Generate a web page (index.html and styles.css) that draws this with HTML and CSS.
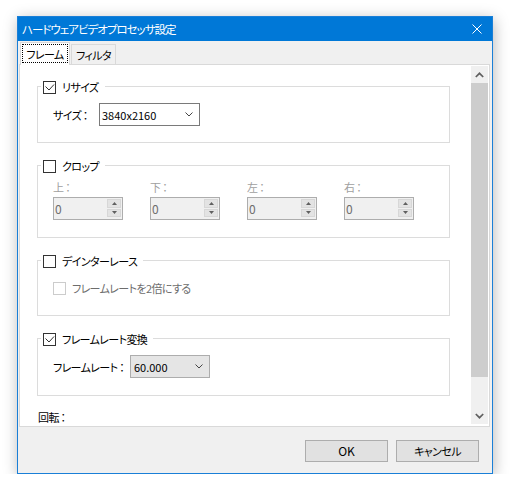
FILE: index.html
```html
<!DOCTYPE html>
<html lang="ja">
<head>
<meta charset="utf-8">
<title>ハードウェアビデオプロセッサ設定</title>
<link rel="stylesheet" href="styles.css">
</head>
<body>
<div class="window">
  <div class="titlebar">
    <span class="title">ハードウェアビデオプロセッサ設定</span>
    <svg class="close" width="10" height="10" viewBox="0 0 10 10"><path d="M0.5 0.5L9.5 9.5M9.5 0.5L0.5 9.5" stroke="#fff" stroke-width="1" fill="none"/></svg>
  </div>
  <div class="tabs">
    <div class="tab active"><span class="focus">フレーム</span></div>
    <div class="tab">フィルタ</div>
  </div>
  <div class="panel">
    <div class="scroll">
      <div class="group g-resize">
        <div class="legend">
          <span class="cb"><svg width="11" height="11" viewBox="0 0 11 11"><path d="M1.5 4.5L5 8L10 2.5" fill="none" stroke="#333" stroke-width="1"/></svg></span>
          <span class="legend-text">リサイズ</span>
        </div>
        <div class="row">
          <span class="lbl size-lbl">サイズ<span class="colon">：</span></span>
          <div class="combo combo-edit">
            <span class="combo-val">3840x2160</span>
            <svg class="chev" width="8" height="5" viewBox="0 0 8 5"><path d="M0.5 0.5L4 4L7.5 0.5" fill="none" stroke="#444" stroke-width="1"/></svg>
          </div>
        </div>
      </div>

      <div class="group g-crop">
        <div class="legend">
          <span class="cb"></span>
          <span class="legend-text">クロップ</span>
        </div>
        <div class="spins">
          <div class="spin-col">
            <span class="dis-lbl">上<span class="colon">：</span></span>
            <div class="spin"><span class="spin-val">0</span><div class="spin-btns"><span class="sbtn"><svg width="5" height="3" viewBox="0 0 5 3"><path d="M2.5 0L5 3H0Z" fill="#606060"/></svg></span><span class="sbtn"><svg width="5" height="3" viewBox="0 0 5 3"><path d="M0 0H5L2.5 3Z" fill="#606060"/></svg></span></div></div>
          </div>
          <div class="spin-col">
            <span class="dis-lbl">下<span class="colon">：</span></span>
            <div class="spin"><span class="spin-val">0</span><div class="spin-btns"><span class="sbtn"><svg width="5" height="3" viewBox="0 0 5 3"><path d="M2.5 0L5 3H0Z" fill="#606060"/></svg></span><span class="sbtn"><svg width="5" height="3" viewBox="0 0 5 3"><path d="M0 0H5L2.5 3Z" fill="#606060"/></svg></span></div></div>
          </div>
          <div class="spin-col">
            <span class="dis-lbl">左<span class="colon">：</span></span>
            <div class="spin"><span class="spin-val">0</span><div class="spin-btns"><span class="sbtn"><svg width="5" height="3" viewBox="0 0 5 3"><path d="M2.5 0L5 3H0Z" fill="#606060"/></svg></span><span class="sbtn"><svg width="5" height="3" viewBox="0 0 5 3"><path d="M0 0H5L2.5 3Z" fill="#606060"/></svg></span></div></div>
          </div>
          <div class="spin-col">
            <span class="dis-lbl">右<span class="colon">：</span></span>
            <div class="spin"><span class="spin-val">0</span><div class="spin-btns"><span class="sbtn"><svg width="5" height="3" viewBox="0 0 5 3"><path d="M2.5 0L5 3H0Z" fill="#606060"/></svg></span><span class="sbtn"><svg width="5" height="3" viewBox="0 0 5 3"><path d="M0 0H5L2.5 3Z" fill="#606060"/></svg></span></div></div>
          </div>
        </div>
      </div>

      <div class="group g-deint">
        <div class="legend">
          <span class="cb"></span>
          <span class="legend-text">デインターレース</span>
        </div>
        <div class="check-row">
          <span class="cb cb-dis"></span>
          <span class="dis-text">フレームレートを2倍にする</span>
        </div>
      </div>

      <div class="group g-fps">
        <div class="legend">
          <span class="cb"><svg width="11" height="11" viewBox="0 0 11 11"><path d="M1.5 4.5L5 8L10 2.5" fill="none" stroke="#333" stroke-width="1"/></svg></span>
          <span class="legend-text">フレームレート変換</span>
        </div>
        <div class="row">
          <span class="lbl fps-lbl">フレームレート<span class="colon">：</span></span>
          <div class="combo combo-list">
            <span class="combo-val">60.000</span>
            <svg class="chev" width="8" height="5" viewBox="0 0 8 5"><path d="M0.5 0.5L4 4L7.5 0.5" fill="none" stroke="#444" stroke-width="1"/></svg>
          </div>
        </div>
      </div>

      <div class="rot">回転<span class="colon">：</span></div>
    </div>
    <div class="scrollbar">
      <div class="sb-arrow"><svg width="9" height="6" viewBox="0 0 9 6"><path d="M0.8 5L4.5 1.3L8.2 5" fill="none" stroke="#606060" stroke-width="1.7"/></svg></div>
      <div class="sb-thumb"></div>
      <div class="sb-track"></div>
      <div class="sb-arrow"><svg width="9" height="6" viewBox="0 0 9 6"><path d="M0.8 1L4.5 4.7L8.2 1" fill="none" stroke="#606060" stroke-width="1.7"/></svg></div>
    </div>
  </div>
  <div class="footer">
    <div class="btn btn-ok">OK</div>
    <div class="btn">キャンセル</div>
  </div>
</div>
</body>
</html>
```

FILE: styles.css
```css
* { box-sizing: border-box; }
html, body { margin: 0; padding: 0; background: #fff; }
body {
  font-family: "Noto Sans CJK JP", "Noto Sans", sans-serif;
  font-size: 11px;
  letter-spacing: -0.6px;
  color: #000;
  font-feature-settings: "palt";
  white-space: nowrap;
}

.colon {
  font-feature-settings: normal;
  letter-spacing: 0;
  margin-left: -1px;
}

.window {
  margin: 16px 0 0 17px;
  width: 476px;
  height: 458px;
  border: 1px solid #1a7fd7;
  background: #f0f0f0;
  box-shadow: 1px 3px 14px rgba(0, 0, 0, 0.28);
  display: flex;
  flex-direction: column;
}

.titlebar {
  flex: none;
  height: 24px;
  background: #0078d7;
  color: #fff;
  display: flex;
  align-items: center;
  justify-content: space-between;
  padding: 0 10px 0 4px;
  line-height: 24px;
  font-size: 11.5px;
  letter-spacing: -1px;
}
.close { display: block; }

.tabs {
  flex: none;
  height: 23px;
  display: flex;
  align-items: flex-end;
  padding-left: 2px;
}
.tab {
  height: 20px;
  width: 45px;
  margin-left: 1px;
  border: 1px solid #d9d9d9;
  border-bottom: none;
  display: flex;
  align-items: center;
  justify-content: center;
  line-height: 14px;
}
.tab.active {
  position: relative;
  z-index: 1;
  margin-left: 0;
  width: 50px;
  height: 23px;
  margin-bottom: -1px;
  background: #fff;
  padding: 1px 1px 2px 1px;
}
.focus {
  flex: 1;
  align-self: stretch;
  outline: 1px dotted #000;
  outline-offset: -1px;
  display: flex;
  align-items: center;
  justify-content: center;
}

.panel {
  flex: none;
  height: 363px;
  margin: 0 2px 0 1px;
  border: 1px solid #d9d9d9;
  background: #fff;
  display: flex;
}
.scroll {
  flex: 1;
  overflow: hidden;
  padding: 21px 0 0 17px;
}

.group {
  width: 413px;
  border: 1px solid #dcdcdc;
  padding: 0 0 16px 15px;
}
.group + .group { margin-top: 22px; }
.g-crop { padding-bottom: 17px; }
.g-deint { padding-bottom: 20px; }
.g-fps { padding-bottom: 17px; }

.legend {
  width: max-content;
  height: 14px;
  margin: -7px 0 0 -12px;
  padding: 0 6px 0 2px;
  background: #fff;
  display: flex;
  align-items: center;
  gap: 6px;
  line-height: 14px;
}

.cb {
  width: 13px;
  height: 13px;
  border: 1px solid #333;
  background: #fff;
  display: block;
  flex: none;
}
.cb svg { display: block; }
.cb-dis { border-color: #cccccc; }

.row {
  margin-top: 9px;
  height: 23px;
  display: flex;
  align-items: center;
  line-height: 14px;
}
.size-lbl { width: 46px; }
.fps-lbl { width: 77px; }

.combo {
  height: 23px;
  display: flex;
  align-items: center;
  justify-content: space-between;
  padding: 0 6px 0 2px;
  letter-spacing: 0;
}
.combo-edit { width: 101px; background: #fff; border: 1px solid #7a7a7a; }
.combo-list { width: 80px; background: #e5e5e5; border: 1px solid #adadad; padding-left: 3px; }
.chev { display: block; }

.spins {
  margin-top: 7px;
  display: flex;
  gap: 27px;
}
.spin-col {
  width: 70px;
  display: flex;
  flex-direction: column;
  gap: 3px;
  line-height: 14px;
}
.dis-lbl { color: #a0a0a0; height: 14px; }
.spin {
  height: 23px;
  border: 1px solid #adadad;
  background: #f0f0f0;
  display: flex;
  align-items: center;
  justify-content: space-between;
  padding-left: 1px;
  font-size: 12px;
}
.spin-val { color: #6d6d6d; }
.spin-btns {
  align-self: stretch;
  width: 14px;
  margin: 1px 1px 2px 0;
  display: flex;
  flex-direction: column;
  gap: 1px;
}
.sbtn {
  flex: 1;
  background: #e3e3e3;
  border: 1px solid #d7d7d7;
  display: flex;
  align-items: center;
  justify-content: center;
}
.sbtn svg { display: block; }

.check-row {
  margin-top: 13px;
  height: 14px;
  display: flex;
  align-items: center;
  gap: 6px;
  line-height: 14px;
}
.dis-text { color: #6d6d6d; }

.rot {
  margin: 14px 0 0 1px;
  line-height: 14px;
}

.scrollbar {
  flex: none;
  width: 17px;
  margin: 1px 1px 2px 0;
  background: #f0f0f0;
  display: flex;
  flex-direction: column;
}
.sb-arrow {
  height: 17px;
  display: flex;
  align-items: center;
  justify-content: center;
}
.sb-arrow svg { display: block; }
.sb-thumb { height: 294px; background: #cdcdcd; }
.sb-track { flex: 1; }

.footer {
  flex: 1;
  display: flex;
  justify-content: flex-end;
  align-items: flex-start;
  gap: 8px;
  padding: 13px 13px 0 0;
}
.btn {
  width: 83px;
  height: 22px;
  background: #e1e1e1;
  border: 1px solid #adadad;
  display: flex;
  align-items: center;
  justify-content: center;
  line-height: 14px;
}
.btn-ok { letter-spacing: 0; font-size: 12px; }
```
